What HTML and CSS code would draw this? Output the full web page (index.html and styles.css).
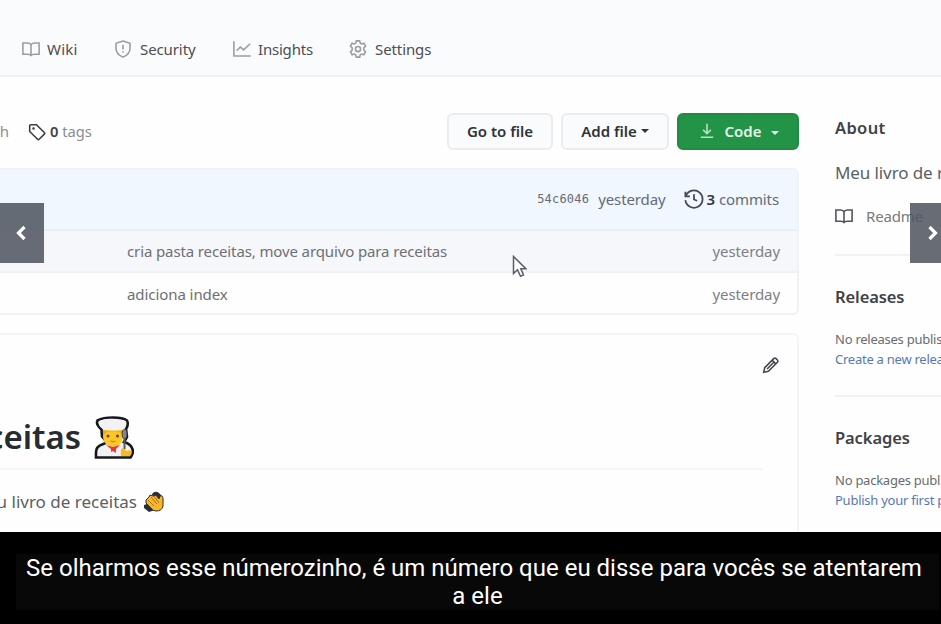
FILE: index.html
```html
<!DOCTYPE html>
<html lang="pt-BR">
<head>
<meta charset="utf-8">
<title>Receitas</title>
<link rel="stylesheet" href="styles.css">
</head>
<body>
<div class="player">
  <div class="video">
    <nav class="tabs">
      <div class="tab tab-wiki"><svg class="icon" viewBox="0 0 16 16"><path d="M8 4.2C7.3 3.1 6.2 2.6 4.8 2.6H.8v10h4.4c1.2 0 2.2.3 2.8 1.1.6-.8 1.6-1.1 2.8-1.1h4.4v-10h-4C9.8 2.6 8.7 3.1 8 4.2zM8 4.2v9.3"/></svg><span>Wiki</span></div>
      <div class="tab tab-security"><svg class="icon" viewBox="0 0 16 16"><path d="M8 .9l6.2 2v4.6c0 3.5-2.2 6-6.2 7.7-4-1.7-6.2-4.2-6.2-7.7V2.900zM8 4.200v4.200M8 10v1.300"/></svg><span>Security</span></div>
      <div class="tab tab-insights"><svg class="icon" viewBox="0 0 16 16"><path d="M.8 1v13.200h15M3.200 9.500l3.300-3.300 3 2.600 5.700-5.500"/></svg><span>Insights</span></div>
      <div class="tab tab-settings"><svg class="icon" viewBox="0 0 16 16"><path d="M6.500.8h3l.5 2 1.200.7 2-.6 1.500 2.600L13.200 7v2l1.500 1.500-1.500 2.600-2-.6-1.200.7-.5 2h-3l-.5-2-1.200-.7-2 .6-1.500-2.600L2.800 9V7L1.300 5.500l1.500-2.600 2 .6L6 2.800z"/><circle cx="8" cy="8" r="2.300"/></svg><span>Settings</span></div>
    </nav>
    <div class="content">
      <main class="files">
        <div class="toolbar">
          <div class="branches"><span>ch</span></div>
          <svg class="icon tag-icon" viewBox="0 0 16 16"><path d="M1.500 2.500v5l7 7a1 1 0 0 0 1.400 0l4.600-4.600a1 1 0 0 0 0-1.400l-7-7h-5a1 1 0 0 0-1 1z"/><circle cx="4.900" cy="4.900" r=".5"/></svg>
          <div class="tags"><b>0</b> tags</div>
          <div class="btn btn-goto"><span>Go to file</span></div>
          <div class="btn btn-add"><span>Add file</span><i class="caret"></i></div>
          <div class="btn btn-code"><svg class="icon download" viewBox="0 0 16 16"><path d="M8 1.500v8.500M4.600 7L8 10.400 11.400 7M2.500 13.500h11"/></svg><span>Code</span><i class="caret"></i></div>
        </div>
        <div class="file-box">
          <div class="commit-row">
            <span class="hash">54c6046</span><span class="day">yesterday</span>
            <svg class="icon history" viewBox="0 0 16 16"><path d="M1.100 2.200v3.600h3.600M1.500 5.600a6.900 6.900 0 1 1-.4 3.300M8 4.200v4.200l2.500 1"/></svg>
            <span class="commits"><b>3</b> commits</span>
          </div>
          <div class="file-row hovered"><span class="msg msg-one">cria pasta receitas, move arquivo para receitas</span><span class="day">yesterday</span></div>
          <div class="file-row"><span class="msg">adiciona index</span><span class="day">yesterday</span></div>
        </div>
        <article class="readme">
          <div class="readme-top"><svg class="icon pencil" viewBox="0 0 16 16"><path d="M1.500 14.500l.9-4.200 8-8a1.500 1.500 0 0 1 2.100 0l1.200 1.200a1.500 1.500 0 0 1 0 2.100l-8 8zM9 3.700L12.300 7M4.500 11.500l6-6"/></svg></div>
          <h1 class="readme-title"><span>ceitas</span>
            <svg class="cook" viewBox="0 0 40 44"><path d="M2 41.500v-5q0-6 6-8l5-2-5-6-.5-7q-6-5-4-9Q9 1.500 19 1.500t14 3q2 4-1 8.500l1 8-3 5q8 2 9 9 0 3-2.500 6.500z" fill="#f1f1f3" stroke="#17181b" stroke-width="2.600"/><path d="M9 14h20v7q-1 7-6 9l-4 1-5-2Q9 27 9 20z" fill="#fcc62b"/><path d="M9 14q10 3 20 0v4l-4-2H13l-4 4z" fill="#efa820"/><path d="M5 5q7-3 14-2t13 2q0 5-3 8-9 3-20 0Q4 10 5 5z" fill="#f2f2f4"/><circle cx="14" cy="20" r="1.500" fill="#65451e"/><circle cx="23.500" cy="20" r="1.500" fill="#65451e"/><path d="M16.500 25q2.500 1.500 5 0" stroke="#b8771b" fill="none"/><path d="M12 29l7 2 7-2-4 4v4l-3-2-2 1v-3z" fill="#e53935"/><path d="M30.500 17v16" stroke="#55585d" stroke-width="2"/><ellipse cx="30.500" cy="18" rx="2.400" ry="4.500" fill="#83868b" stroke="#404247"/><path d="M27 40q-1-8 2-8l4 3 3-1q3 3 0 6z" fill="#f9b91f"/></svg>
          </h1>
          <div class="readme-text"><span>u livro de receitas</span>
            <svg class="wave" viewBox="0 0 22 22"><path d="M9 3q3-4 7-1l3 3-8 5zM1 14l6-2 5 7-6 2-5-4z" fill="#25303a"/><path d="M3 9l3-3 1-2 3 1 3-1 3 4 1-3q3-1 3 3v7q-1 5-7 5-3 0-5-3L3 12z" fill="#f6b62d" stroke="#3b2b18"/><path d="M5 9l6 6M8 6l6 7M11 5l5 7" stroke="#ad701c" fill="none"/></svg>
          </div>
        </article>
      </main>
      <aside class="side">
        <section class="about">
          <h2 class="t-about">About</h2>
          <p class="about-text">Meu livro de receitas</p>
          <div class="readme-link"><svg class="icon" viewBox="0 0 16 16"><path d="M8 4.200C7.300 3.100 6.200 2.600 4.800 2.600H.8v10h4.400c1.200 0 2.200.3 2.800 1.100.6-.8 1.600-1.100 2.800-1.100h4.400v-10h-4C9.800 2.600 8.700 3.100 8 4.200zM8 4.200v9.300"/></svg><span>Readme</span></div>
        </section>
        <section class="side-section releases"><h2>Releases</h2><p>No releases published</p><a>Create a new release</a></section>
        <section class="side-section packages"><h2>Packages</h2><p>No packages published</p><a>Publish your first package</a></section>
      </aside>
    </div>
    <svg class="cursor" viewBox="0 0 15 23"><path d="M1.500 1.500v17l4-3.800 3 6.500 3-1.300-2.700-6.200h5z"/></svg>
    <div class="arrow prev"><svg viewBox="0 0 12 16"><path d="M9.500 2L3.500 8l6 6"/></svg></div>
    <div class="arrow next"><svg viewBox="0 0 12 16"><path d="M2.500 2l6 6-6 6"/></svg></div>
  </div>
  <div class="caption"><div class="caption-box"><span>Se olharmos esse númerozinho, é um número que eu disse para vocês se atentarem</span><span class="cap-two">a ele</span></div></div>
</div>
</body>
</html>
```
FILE: styles.css
```css
* { box-sizing: border-box; }
body { margin: 0; background: #000; font: 15px/20px "Noto Sans", sans-serif; color: #55585d; }
h1, h2, p { margin: 0; }
.player { width: 941px; height: 624px; overflow: hidden; }
.video { position: relative; height: 532px; overflow: hidden; background: #fefefe; }
.icon { width: 18px; height: 18px; flex: none; fill: none; stroke: currentColor; stroke-width: 1.400; }
span, h2, p, a { white-space: nowrap; }

.tabs { display: flex; height: 77px; padding: 22px 0 0 22px; background: #fafbfc; border-bottom: 2px solid #eff1f3; }
.tab { display: flex; align-items: center; height: 54px; gap: 7px; color: #4c4e52; letter-spacing: -.1px; }
.tab .icon { color: #9a9da1; }
.tab-wiki { width: 93px; letter-spacing: .2px; }
.tab-security { width: 118px; }
.tab-security .icon { margin-left: -1px; margin-right: 1px; }
.tab-insights { width: 116px; letter-spacing: -.2px; }
.tab-settings { gap: 8px; }

.content { display: flex; }
.files { width: 799px; flex: none; }
.toolbar { display: flex; align-items: center; height: 37px; margin: 36px 0 18px; }
.branches { display: flex; justify-content: flex-end; width: 9px; height: 22px; margin-right: 19px; overflow: hidden; color: #8d9095; }
.tag-icon { color: #3b3e43; }
.tags { width: 401px; height: 22px; padding-left: 4px; color: #8a8d91; font-size: 14.700px; }
.tags b { color: #3f4247; font-weight: 600; }
.btn { display: flex; align-items: center; justify-content: center; height: 37px; padding-bottom: 1px; flex: none; border: 2px solid #ebecee; border-radius: 6px; background: #fafbfc; color: #303338; font-weight: 600; }
.btn-goto { width: 106px; margin-right: 8px; }
.btn-add { width: 108px; margin-right: 8px; }
.btn-code { width: 122px; background: #239348; border-color: #218a43; color: #e2f7e8; }
.caret { margin-left: 4px; border: 4px solid transparent; border-top-color: currentColor; border-bottom: 0; }
.btn-code .caret { margin: 3px 0 0 9px; }
.download { margin-right: 9px; color: #b5e5c3; }

.file-box { height: 147px; border: 2px solid #f0f2f5; border-left: 0; border-radius: 0 6px 6px 0; overflow: hidden; }
.commit-row { display: flex; align-items: center; height: 61px; justify-content: flex-end; padding: 0 18px 2px 0; background: #f0f7ff; color: #666b74; border-bottom: 2px solid #e8eef5; letter-spacing: -.1px; }
.commit-row .hash { font: 12px/20px "DejaVu Sans Mono", monospace; letter-spacing: .2px; margin-right: 9px; }
.commit-row .day { margin-right: 18px; }
.history { width: 20px; height: 20px; color: #44484f; margin-right: 3px; }
.commits b { color: #33373d; font-weight: 600; }
.file-row { display: flex; align-items: center; justify-content: space-between; height: 41px; padding: 0 17px 0 127px; color: #6d7074; }
.msg { letter-spacing: -.07px; }
.msg-one { letter-spacing: -.12px; }
.file-row .day { color: #7d8086; letter-spacing: -.1px; }
.file-row.hovered { height: 42px; background: #f6f7fb; border-bottom: 2px solid #eff1f4; }

.readme { height: 230px; margin-top: 18px; border: 2px solid #f4f5f7; border-left: 0; border-bottom: 0; border-radius: 0 6px 0 0; }
.readme-top { display: flex; justify-content: flex-end; padding: 21px 17px 0 0; }
.pencil { color: #43464b; }
.readme-title { display: flex; align-items: center; width: 763px; height: 96px; padding-top: 34px; border-bottom: 2px solid #f5f6f7; font-size: 33px; line-height: 40px; font-weight: 600; color: #282b30; }
.readme-title span { display: flex; justify-content: flex-end; width: 81px; padding-bottom: 3px; }
.cook { width: 40px; height: 44px; margin-left: 13px; }
.readme-text { display: flex; align-items: center; height: 62px; padding-top: 2px; font-size: 17px; color: #5b5e63; }
.readme-text span { display: flex; justify-content: flex-end; width: 137px; }
.wave { width: 22px; height: 22px; margin-left: 6px; }

.side { width: 106px; margin-left: 36px; overflow: hidden; height: 455px; flex: none; }
.side h2 { font-size: 16.500px; line-height: 24px; font-weight: 600; color: #3f4247; letter-spacing: -.1px; }
.side .t-about { letter-spacing: .35px; }
.about { height: 179px; padding-top: 39px; border-bottom: 2px solid #f1f2f4; }
.about-text { margin-top: 21px; font-size: 17px; line-height: 24px; color: #5b5e63; letter-spacing: -.1px; }
.readme-link { display: flex; align-items: center; margin-top: 21px; gap: 13px; color: #777a7f; letter-spacing: -.15px; }
.readme-link .icon { color: #505359; }
.side-section { height: 141px; padding-top: 29px; font-size: 13px; color: #686b70; letter-spacing: -.25px; }
.side-section p { margin-top: 20px; }
.side-section a { display: block; color: #5878b5; }
.releases { border-bottom: 2px solid #f1f2f4; }

.cursor { position: absolute; left: 512px; top: 255px; width: 15px; height: 23px; fill: #fff; stroke: #5b5e64; stroke-width: 1.500; }
.arrow { position: absolute; top: 203px; display: flex; align-items: center; height: 60px; background: rgba(80, 86, 96, .87); }
.arrow svg { width: 12px; height: 16px; fill: none; stroke: #fff; stroke-width: 3.200; }
.prev { left: 0; width: 44px; padding-left: 15px; }
.next { right: 0; width: 31px; padding-left: 17px; }

.caption { height: 92px; padding: 22px 2px 0 16px; background: #000; }
.caption-box { display: flex; flex-direction: column; align-items: center; height: 56px; background: #080808; color: #fff; font: 24px/28px Roboto, sans-serif; padding-right: 7px; }
.cap-two { margin-left: 7px; }
```
